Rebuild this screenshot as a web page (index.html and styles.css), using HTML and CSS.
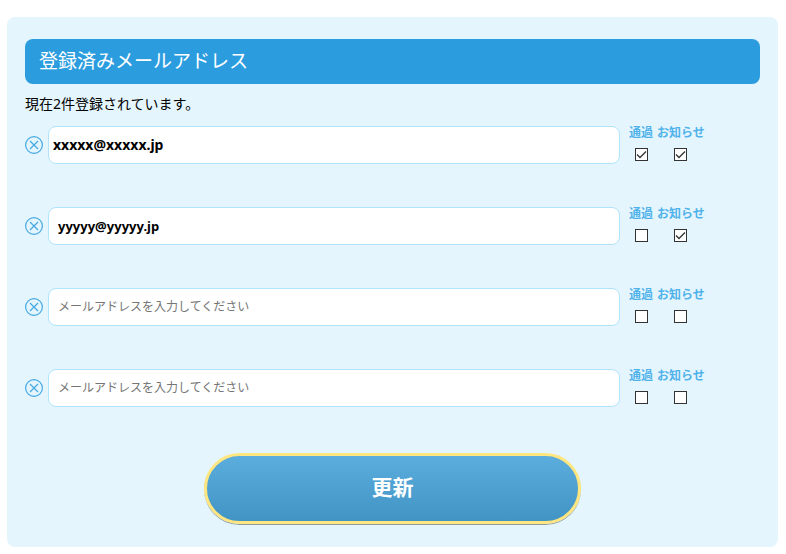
FILE: index.html
```html
<!DOCTYPE html>
<html lang="ja">
<head>
  <meta charset="UTF-8">
  <title>登録済みメールアドレス</title>
  <meta name="viewport" content="width=device-width, initial-scale=1">
  <link rel="stylesheet" href="styles.css">
</head>
<body>

<svg class="sprite" aria-hidden="true">
  <symbol id="icon-clear" viewBox="0 0 18 18">
    <circle cx="9" cy="9" r="8.4"/>
    <path d="M5 5L13 13M13 5L5 13"/>
  </symbol>
</svg>

<form class="panel">
  <h1>登録済みメールアドレス</h1>
  <p class="count">現在2件登録されています。</p>

  <div class="row">
    <button type="button" class="clear" aria-label="削除"><svg><use href="#icon-clear"/></svg></button>
    <input type="email" class="mail first" aria-label="メールアドレス1" value="xxxxx@xxxxx.jp">
    <div class="options">
      <label>通過<input type="checkbox" checked></label>
      <label>お知らせ<input type="checkbox" checked></label>
    </div>
  </div>

  <div class="row">
    <button type="button" class="clear" aria-label="削除"><svg><use href="#icon-clear"/></svg></button>
    <input type="email" class="mail" aria-label="メールアドレス2" value="yyyyy@yyyyy.jp">
    <div class="options">
      <label>通過<input type="checkbox"></label>
      <label>お知らせ<input type="checkbox" checked></label>
    </div>
  </div>

  <div class="row">
    <button type="button" class="clear" aria-label="削除"><svg><use href="#icon-clear"/></svg></button>
    <input type="email" class="mail" aria-label="メールアドレス3" placeholder="メールアドレスを入力してください">
    <div class="options">
      <label>通過<input type="checkbox"></label>
      <label>お知らせ<input type="checkbox"></label>
    </div>
  </div>

  <div class="row">
    <button type="button" class="clear" aria-label="削除"><svg><use href="#icon-clear"/></svg></button>
    <input type="email" class="mail" aria-label="メールアドレス4" placeholder="メールアドレスを入力してください">
    <div class="options">
      <label>通過<input type="checkbox"></label>
      <label>お知らせ<input type="checkbox"></label>
    </div>
  </div>

  <button type="submit" class="update">更新</button>
</form>

</body>
</html>
```
FILE: styles.css
```css
* { box-sizing: border-box; }
body {
  margin: 17px 8px 7px 7px;
  background: #fff;
  color: #000;
  font-family: "Noto Sans", "Noto Sans CJK JP", sans-serif;
}
.sprite { display: none; }
.panel {
  padding: 22px 18px 23px;
  background: #e4f5fe;
  border-radius: 8px;
}
h1 {
  margin: 0;
  padding: 0 14px;
  background: #2b9ddf;
  border-radius: 8px;
  color: #fff;
  font-size: 19px;
  font-weight: normal;
  line-height: 45px;
}
.count {
  margin: 10px 0 12px;
  font-size: 14px;
  line-height: 20px;
}
.row {
  display: flex;
  align-items: flex-start;
  margin-bottom: 43px;
}
.clear {
  width: 18px; height: 18px;
  margin: 10px 5px 0 0;
  padding: 0;
  border: none;
  background: none;
  cursor: pointer;
}
.clear svg {
  display: block;
  width: 18px; height: 18px;
  fill: none;
  stroke: #45a9e2;
  stroke-width: 1.2;
}
.mail {
  flex: 1;
  min-width: 0;
  height: 38px;
  padding: 0 9px;
  border: 1px solid #b0e4fc;
  border-radius: 8px;
  background: #fff;
  color: #000;
  font-family: inherit;
  font-size: 13px;
  font-weight: bold;
}
.mail.first {
  padding: 0 4px 2px;
  font-size: 14px;
}
.mail:placeholder-shown { padding-bottom: 3px; }
.mail::placeholder {
  color: #757575;
  font-size: 12px;
  font-weight: normal;
}
.options {
  display: flex;
  gap: 4px;
  width: 140px;
  padding-left: 9px;
}
.options label {
  display: flex;
  flex-direction: column;
  align-items: center;
  gap: 8px;
  color: #4fb2ea;
  font-size: 12px;
  font-weight: bold;
  line-height: 14px;
}
.options input {
  appearance: none;
  width: 13px; height: 13px;
  margin: 0;
  border: 1px solid #333;
  background: #fff;
}
.options input:checked {
  background: #fff url("data:image/svg+xml,%3Csvg xmlns='http://www.w3.org/2000/svg' viewBox='0 0 11 11'%3E%3Cpath d='M1 5.5L4 8.5L10 2.5' fill='none' stroke='%23333' stroke-width='1.3'/%3E%3C/svg%3E") center / 11px 11px no-repeat;
}
.update {
  display: block;
  width: 377px;
  max-width: 100%;
  height: 71px;
  margin: 46px auto 0;
  padding: 0 0 5px;
  border: 3px solid #ffe680;
  border-radius: 36px;
  background: linear-gradient(#5aaddd, #4294c4);
  box-shadow: 0 1px 0 #8d9aa3;
  color: #fff;
  font-family: inherit;
  font-size: 21px;
  font-weight: bold;
  cursor: pointer;
}
```
